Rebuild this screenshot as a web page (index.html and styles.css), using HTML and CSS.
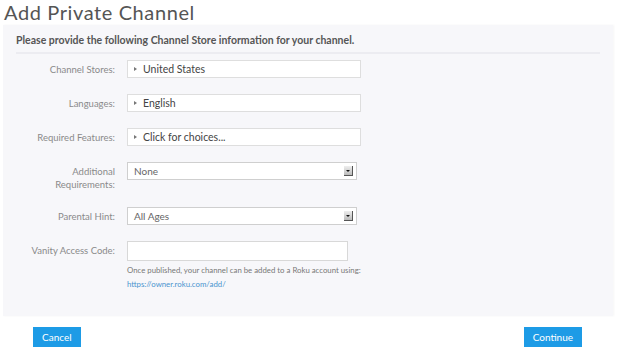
FILE: index.html
```html
<!DOCTYPE html>
<html lang="en">

<head>
    <meta charset="UTF-8">
    <title>Add Private Channel</title>
    <link rel="stylesheet" href="styles.css">
</head>

<body>
    <h1 class="page-title">Add Private Channel</h1>
    <div class="panel">
        <h2 class="panel-heading">Please provide the following Channel Store information for your channel.</h2>
        <div class="form">
            <div class="row">
                <label class="label">Channel Stores:</label>
                <div class="picker"><span class="caret"></span>United States</div>
            </div>
            <div class="row">
                <label class="label">Languages:</label>
                <div class="picker"><span class="caret"></span>English</div>
            </div>
            <div class="row">
                <label class="label">Required Features:</label>
                <div class="picker"><span class="caret"></span>Click for choices...</div>
            </div>
            <div class="row">
                <label class="label">Additional<br>Requirements:</label>
                <div class="select">None<span class="select-arrow"></span></div>
            </div>
            <div class="row">
                <label class="label">Parental Hint:</label>
                <div class="select">All Ages<span class="select-arrow"></span></div>
            </div>
            <div class="row">
                <label class="label">Vanity Access Code:</label>
                <div class="field">
                    <input type="text" class="text-input">
                    <p class="hint">Once published, your channel can be added to a Roku account using:</p>
                    <a class="hint-link" href="#">https://owner.roku.com/add/</a>
                </div>
            </div>
        </div>
    </div>
    <div class="actions">
        <button class="btn">Cancel</button>
        <button class="btn">Continue</button>
    </div>
</body>

</html>
```

FILE: styles.css
```css
body {
    font-family: Lato, 'Open Sans', sans-serif;
    background-color: #fff;
    color: #555;
    margin: 0;
}

.page-title {
    font-size: 20px;
    font-weight: normal;
    color: #555;
    margin: 0;
    padding: 1px 0 0 4px;
    line-height: 22px;
    letter-spacing: 0.6px;
}

.panel {
    background: #f7f7fa;
    margin: 2px 7px 0 3px;
    padding: 8px 13px 26px 13px;
    box-shadow: 1px 0 2px rgba(0, 0, 0, 0.04);
}

.panel-heading {
    font-size: 10.5px;
    font-weight: bold;
    color: #555;
    margin: 0;
    padding: 0 0 5px 0;
    line-height: 14px;
    border-bottom: 2px solid #ececf1;
}

.form {
    padding-top: 6px;
}

.row {
    display: flex;
    align-items: flex-start;
    margin-bottom: 16px;
}

.row:last-child {
    margin-bottom: 0;
}

.label {
    width: 99px;
    text-align: right;
    font-size: 9.5px;
    color: #8a8a8a;
    line-height: 13px;
    padding-top: 3px;
    margin-right: 12px;
}

.picker {
    width: 232px;
    height: 16px;
    background: #fff;
    border: 1px solid #dedede;
    font-size: 10.5px;
    color: #444;
    line-height: 16px;
    display: flex;
    align-items: center;
}

.caret {
    width: 0;
    height: 0;
    border-top: 2.5px solid transparent;
    border-bottom: 2.5px solid transparent;
    border-left: 3px solid #777;
    margin: 0 6px 0 6px;
}

.select {
    position: relative;
    width: 222px;
    height: 16px;
    background: #fff;
    border: 1px solid #cfcfcf;
    font-size: 10px;
    color: #666;
    line-height: 16px;
    padding-left: 6px;
}

.select-arrow {
    position: absolute;
    right: 3px;
    top: 3px;
    width: 8px;
    height: 9px;
    background: linear-gradient(#eee, #bbb);
    border-right: 1px solid #555;
    border-bottom: 1px solid #555;
}

.select-arrow::after {
    content: '';
    position: absolute;
    left: 2px;
    top: 4px;
    border-left: 2px solid transparent;
    border-right: 2px solid transparent;
    border-top: 2px solid #111;
}

.text-input {
    display: block;
    width: 221px;
    height: 20px;
    margin: 0;
    padding: 0;
    border: 1px solid #d8d8d8;
    box-sizing: border-box;
    background: #fff;
}

.hint {
    font-size: 7.8px;
    color: #777;
    margin: 4px 0 0;
    line-height: 11px;
}

.hint-link {
    display: block;
    font-size: 7.8px;
    color: #4a94cf;
    text-decoration: none;
    margin-top: 3px;
    line-height: 11px;
}

.actions {
    display: flex;
    justify-content: space-between;
    padding: 0 38px 0 33px;
    margin-top: 11px;
}

.btn {
    background-color: #1d9be6;
    color: #fff;
    font-family: Lato, 'Open Sans', sans-serif;
    font-size: 10px;
    border: none;
    height: 20px;
    padding: 0 9px;
    cursor: pointer;
}
```
